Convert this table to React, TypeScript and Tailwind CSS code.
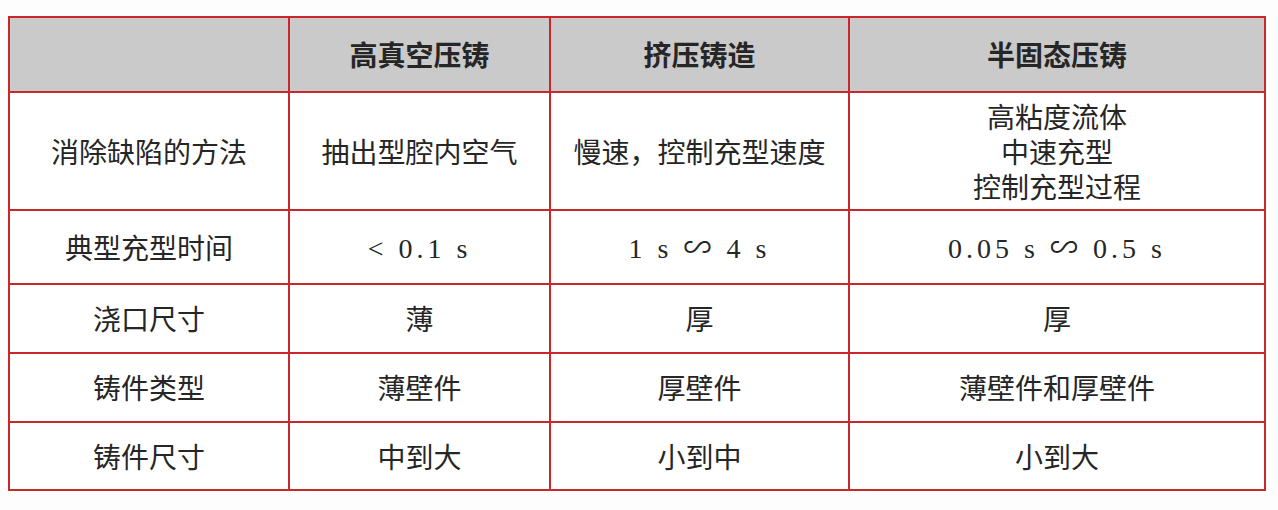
const num = "font-['Liberation_Serif','Noto_Sans_CJK_SC',serif] text-[28px] tracking-[4px]";

const rows: { label: string; cells: React.ReactNode[] }[] = [
  {
    label: "消除缺陷的方法",
    cells: [
      "抽出型腔内空气",
      "慢速，控制充型速度",
      <>
        高粘度流体
        <br />
        中速充型
        <br />
        控制充型过程
      </>,
    ],
  },
  {
    label: "典型充型时间",
    cells: [
      <span className={num}>&lt; 0.1 s</span>,
      <span className={num}>1 s ∽ 4 s</span>,
      <span className={num}>0.05 s ∽ 0.5 s</span>,
    ],
  },
  { label: "浇口尺寸", cells: ["薄", "厚", "厚"] },
  { label: "铸件类型", cells: ["薄壁件", "厚壁件", "薄壁件和厚壁件"] },
  { label: "铸件尺寸", cells: ["中到大", "小到中", "小到大"] },
];

const heights = ["h-[118px]", "h-[74px]", "h-[69px]", "h-[69px]", "h-[68px]"];

export default function App() {
  return (
    <div className="w-[1278px] h-[510px] bg-[#fdfdfd] pt-[16px] pl-[8px] font-['Noto_Sans_CJK_SC','Noto_Sans',sans-serif] text-[#262626]">
      <table className="border-collapse table-fixed w-[1256px] text-[28px] leading-[35px]">
        <colgroup>
          <col className="w-[280px]" />
          <col className="w-[261px]" />
          <col className="w-[299px]" />
          <col className="w-[416px]" />
        </colgroup>
        <thead>
          <tr className="h-[75px] bg-[#cacaca]">
            <th className="border-2 border-[#c8282a]"></th>
            <th className="border-2 border-[#c8282a] font-bold">高真空压铸</th>
            <th className="border-2 border-[#c8282a] font-bold">挤压铸造</th>
            <th className="border-2 border-[#c8282a] font-bold">半固态压铸</th>
          </tr>
        </thead>
        <tbody>
          {rows.map((r, i) => (
            <tr key={r.label} className={`${heights[i]} bg-white`}>
              <td className="border-2 border-[#c8282a] text-center">{r.label}</td>
              {r.cells.map((c, j) => (
                <td key={j} className="border-2 border-[#c8282a] text-center">
                  {c}
                </td>
              ))}
            </tr>
          ))}
        </tbody>
      </table>
    </div>
  );
}
